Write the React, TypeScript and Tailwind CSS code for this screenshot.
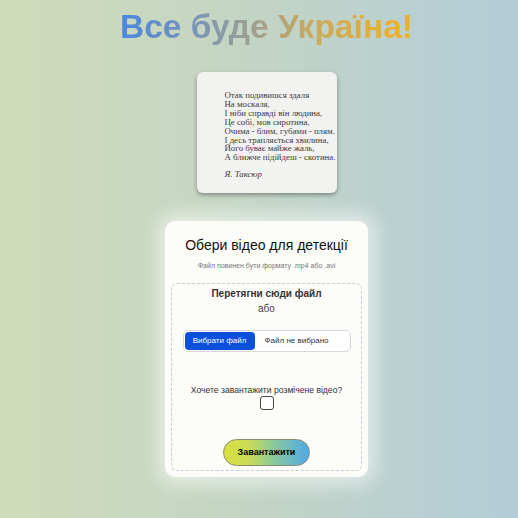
import React from "react";

export default function App() {
  const poem = [
    "Отак подивишся здаля",
    "На москаля,",
    "І ніби справді він людина,",
    "Це собі, мов сиротина,",
    "Очима - блим, губами - плям.",
    "І десь трапляється хвилина,",
    "Його буває майже жаль,",
    "А ближче підійдеш - скотина.",
  ];
  return (
    <div
      className="w-[518px] h-[518px] overflow-hidden bg-[linear-gradient(90deg,#d0dbb8_0%,#c4d5c4_45%,#b2cdd8_100%)] flex flex-col items-center pl-[15px]"
      style={{ fontFamily: '"Liberation Sans", Arial, sans-serif' }}
    >
      <h1 className="mt-[7px] text-[33.5px] leading-[40px] font-bold bg-[linear-gradient(90deg,#4a86e0_0%,#8a9aa8_35%,#c8aa60_65%,#f2b020_100%)] bg-clip-text text-transparent">
        Все буде Україна!
      </h1>
      <div
        className="mt-[25px] w-[140px] h-[121px] bg-[#f2f2f0] rounded-[6px] shadow-[0_2px_4px_rgba(0,0,0,0.35)] flex flex-col pl-[28px] pt-[19px] text-[#3a3a3a] text-[8.8px] leading-[8.9px]"
        style={{ fontFamily: '"Liberation Serif", "Times New Roman", serif' }}
      >
        {poem.map((l, i) => (
          <div key={i} className="whitespace-nowrap">{l}</div>
        ))}
        <div className="italic mt-[8px]">Я. Таксюр</div>
      </div>
      <div className="mt-[28px] w-[203px] h-[256px] bg-[#fcfcf8] rounded-[10px] shadow-[0_0_18px_8px_rgba(255,255,255,0.55)] p-[6px] flex flex-col">
        <div className="text-center text-[14px] leading-[18px] text-[#111] mt-[9px]">Обери відео для детекції</div>
        <div className="text-center text-[7px] leading-[9px] text-[#777] mt-[7px]">Файл повинен бути формату .mp4 або .avi</div>
        <div className="mt-[13px] flex-1 border border-dashed border-[#c4ccd8] rounded-[6px] flex flex-col items-center">
          <div className="mt-[4px] text-[10px] leading-[12px] font-bold text-[#333]">Перетягни сюди файл</div>
          <div className="mt-[3px] text-[10px] leading-[12px] text-[#444]">або</div>
          <div className="mt-[15px] w-[168px] h-[22px] rounded-[5px] border border-[#d8d8d8] bg-white flex items-center p-[1px]">
            <div className="h-[18px] w-[70px] rounded-[4px] bg-[#0a50d8] text-white text-[8px] flex items-center justify-center">Вибрати файл</div>
            <div className="ml-[10px] text-[8px] text-[#333]">Файл не вибрано</div>
          </div>
          <div className="mt-[33px] text-[8.6px] leading-[11px] text-[#333]">Хочете завантажити розмічене відео?</div>
          <div className="mt-[0px] w-[14px] h-[14px] rounded-[3px] border border-[#444] bg-white"></div>
          <div className="mt-[29px] w-[87px] h-[27px] rounded-full border border-[#8a8a70] bg-[linear-gradient(90deg,#d8e040_0%,#c8dc58_30%,#88c8a0_60%,#50a8e8_100%)] flex items-center justify-center text-[9px] font-bold text-black">
            Завантажити
          </div>
        </div>
      </div>
    </div>
  );
}
